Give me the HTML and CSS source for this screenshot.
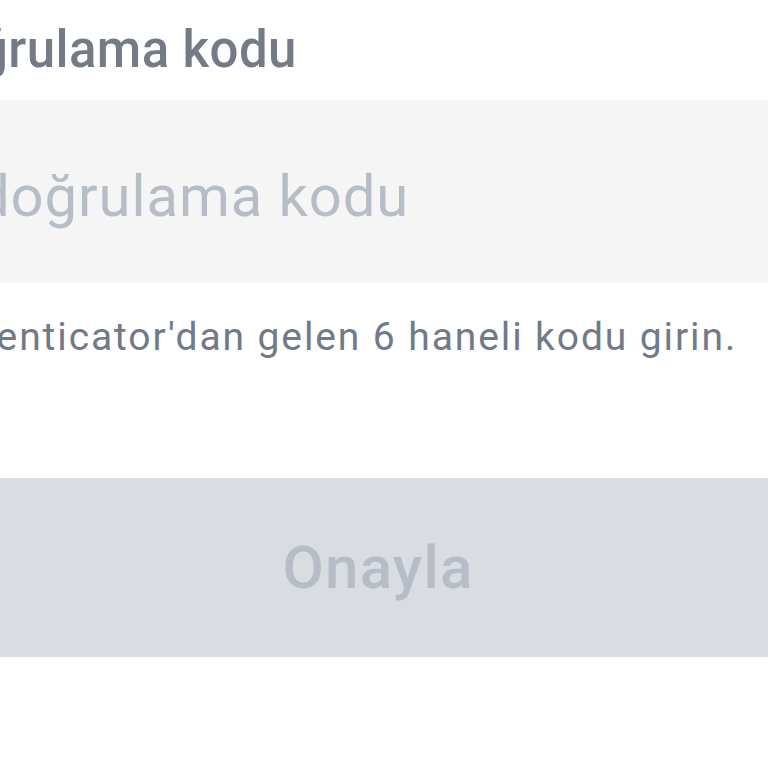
FILE: index.html
```html
<!DOCTYPE html>
<html lang="tr">
<head>
<meta charset="utf-8">
<title>Doğrulama kodu</title>
<link rel="stylesheet" href="styles.css">
</head>
<body>
<main class="form">
  <label class="label" for="code">Doğrulama kodu</label>
  <div class="field">
    <input id="code" class="input" type="text" placeholder="doğrulama kodu">
  </div>
  <p class="hint">Authenticator'dan gelen 6 haneli kodu girin.</p>
  <button class="submit" type="button" disabled>Onayla</button>
</main>
</body>
</html>
```
FILE: styles.css
```css
html, body {
  margin: 0;
  padding: 0;
  background: #ffffff;
  overflow: hidden;
  width: 768px;
  height: 768px;
}
.form {
  margin-left: -200px;
  width: 1156px;
  display: flex;
  flex-direction: column;
  font-family: Roboto, "Noto Sans", sans-serif;
}
.label {
  display: block;
  padding-left: 116px;
  margin-top: 20px;
  font-size: 51px;
  line-height: 60px;
  font-weight: 500;
  letter-spacing: 0.4px;
  color: #747b87;
}
.field {
  margin-top: 20px;
  height: 183px;
  background: #f5f5f5;
  display: flex;
  align-items: center;
}
.input {
  border: 0;
  outline: 0;
  background: transparent;
  width: 100%;
  padding: 8px 0 0 177px;
  font-family: Roboto, "Noto Sans", sans-serif;
  font-size: 58px;
  letter-spacing: 0.9px;
  color: #1e2329;
}
.input::placeholder {
  color: #b7bdc6;
}
.hint {
  margin: 29px 0 0 0;
  padding-left: 108px;
  font-size: 39px;
  line-height: 50px;
  letter-spacing: 1.9px;
  color: #707a8a;
}
.submit {
  margin-top: 116px;
  height: 179px;
  border: 0;
  background: #d9dce1;
  color: #b7bdc6;
  font-family: Roboto, "Noto Sans", sans-serif;
  font-size: 60px;
  font-weight: 500;
  letter-spacing: 1.2px;
  padding: 0;
}
```
